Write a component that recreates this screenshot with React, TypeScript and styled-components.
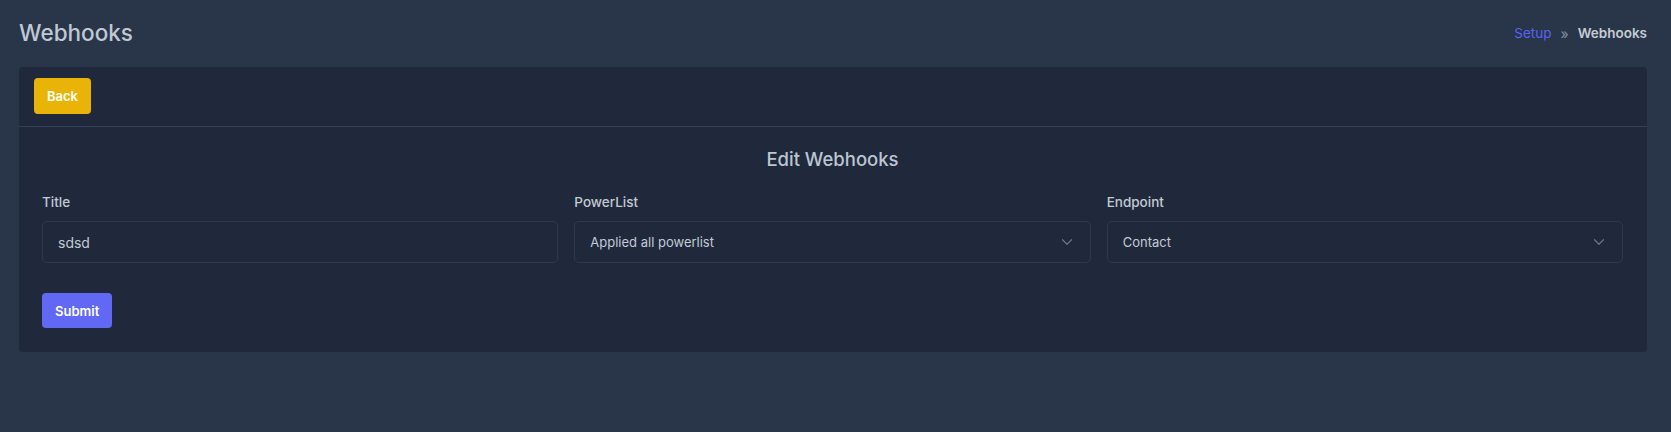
import React from "react";
import styled, { createGlobalStyle } from "styled-components";

const Global = createGlobalStyle`
  html, body { margin: 0; padding: 0; background: #293548; }
  body { font-family: Inter, "Noto Sans", "Liberation Sans", sans-serif; -webkit-font-smoothing: antialiased; }
  * { box-sizing: border-box; }
`;

const Page = styled.div`
  min-height: 432px;
  padding: 17px 24px 0 19px;
  background: #293548;
`;

const TopBar = styled.div`
  display: flex;
  align-items: center;
  justify-content: space-between;
  height: 30px;
  margin-bottom: 20px;
`;

const PageTitle = styled.h1`
  margin: 0;
  font-size: 22.5px;
  font-weight: 500;
  color: #bfc8d4;
`;

const Crumbs = styled.nav`
  display: flex;
  align-items: center;
  gap: 9px;
  font-size: 13.5px;
  padding-top: 2px;
`;

const CrumbLink = styled.a`
  color: #5b63f2;
  text-decoration: none;
`;

const CrumbSep = styled.span`
  color: #8691a1;
  font-size: 14px;
`;

const CrumbCurrent = styled.span`
  color: #c4cbd5;
  font-weight: 600;
`;

const Card = styled.section`
  background: #1f293b;
  border-radius: 4px;
`;

const CardHeader = styled.div`
  padding: 11px 15px 12px;
  border-bottom: 1px solid #344054;
  display: flex;
`;

const Button = styled.button<{ $tone: "yellow" | "indigo" }>`
  border: none;
  border-radius: 4px;
  font-family: inherit;
  font-size: 13px;
  font-weight: 600;
  color: #ffffff;
  cursor: pointer;
  background: ${(p) => (p.$tone === "yellow" ? "#eab308" : "#6168f3")};
  height: ${(p) => (p.$tone === "yellow" ? "36px" : "35px")};
  padding: 0 13px;
`;

const CardBody = styled.div`
  padding: 12px 24px 24px 23px;
`;

const FormTitle = styled.h2`
  margin: 0 0 15px;
  text-align: center;
  font-size: 18.5px;
  font-weight: 500;
  color: #bcc5d1;
  line-height: 40px;
`;

const Grid = styled.div`
  display: grid;
  grid-template-columns: repeat(3, 1fr);
  gap: 16px;
  margin-bottom: 30px;
`;

const Field = styled.div`
  display: flex;
  flex-direction: column;
  gap: 10px;
`;

const Label = styled.label`
  font-size: 13.5px;
  font-weight: 500;
  color: #c2cad4;
  line-height: 17px;
`;

const Control = styled.div`
  height: 42px;
  border: 1px solid #2e394c;
  border-radius: 5px;
  background: #1f293b;
  display: flex;
  align-items: center;
  justify-content: space-between;
  padding: 0 14px 0 15px;
`;

const Value = styled.span<{ $size: number }>`
  font-size: ${(p) => p.$size}px;
  color: #c3cbd6;
`;

const Chevron = () => (
  <svg width="18" height="18" viewBox="0 0 24 24" fill="none" stroke="#6b7585" strokeWidth="1.6" strokeLinecap="round" strokeLinejoin="round">
    <path d="m6 9 6 6 6-6" />
  </svg>
);

export default function App() {
  return (
    <Page>
      <Global />
      <TopBar>
        <PageTitle>Webhooks</PageTitle>
        <Crumbs>
          <CrumbLink href="#">Setup</CrumbLink>
          <CrumbSep>»</CrumbSep>
          <CrumbCurrent>Webhooks</CrumbCurrent>
        </Crumbs>
      </TopBar>
      <Card>
        <CardHeader>
          <Button $tone="yellow">Back</Button>
        </CardHeader>
        <CardBody>
          <FormTitle>Edit Webhooks</FormTitle>
          <Grid>
            <Field>
              <Label>Title</Label>
              <Control>
                <Value $size={14}>sdsd</Value>
              </Control>
            </Field>
            <Field>
              <Label>PowerList</Label>
              <Control>
                <Value $size={13}>Applied all powerlist</Value>
                <Chevron />
              </Control>
            </Field>
            <Field>
              <Label>Endpoint</Label>
              <Control>
                <Value $size={13}>Contact</Value>
                <Chevron />
              </Control>
            </Field>
          </Grid>
          <Button $tone="indigo">Submit</Button>
        </CardBody>
      </Card>
    </Page>
  );
}
